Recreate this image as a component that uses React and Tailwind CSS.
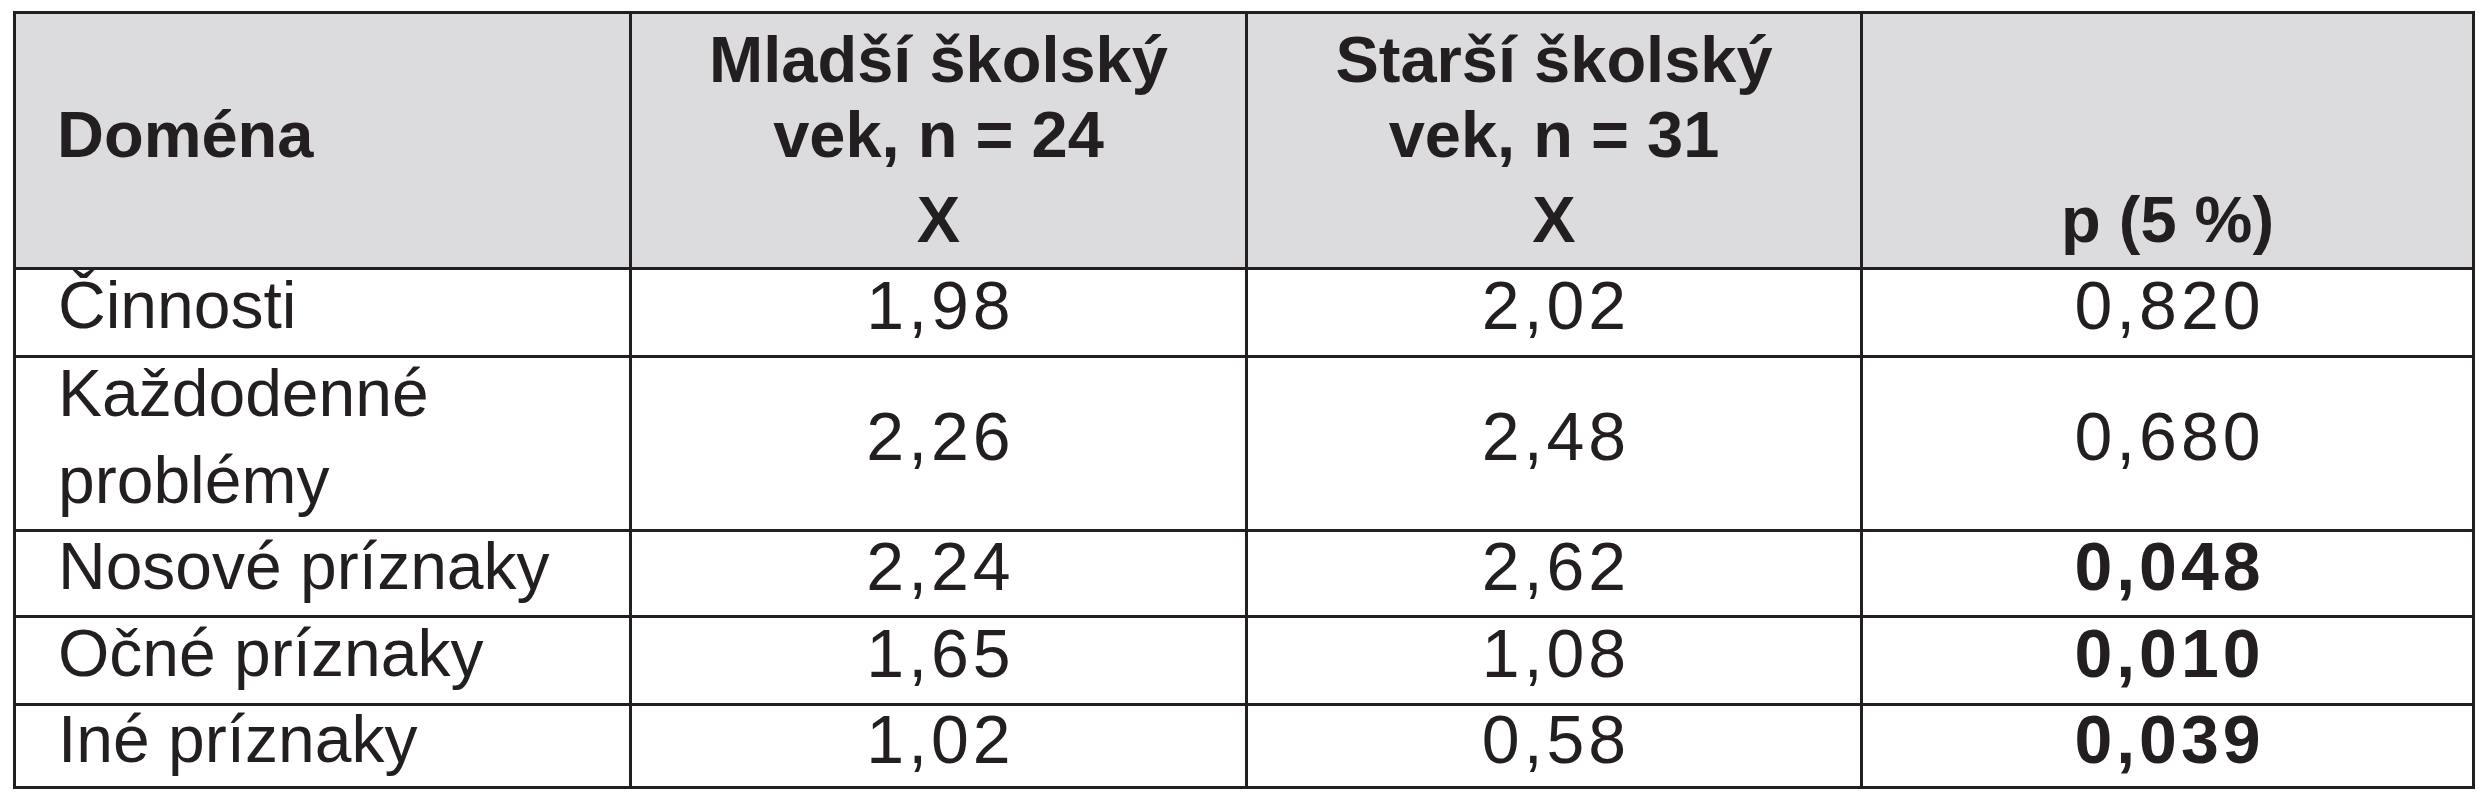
const riadky = [
    { nazov: ['Činnosti'], mladsi: '1,98', starsi: '2,02', p: '0,820', vyznamne: false, vyska: 'h-[88px]' },
    { nazov: ['Každodenné', 'problémy'], mladsi: '2,26', starsi: '2,48', p: '0,680', vyznamne: false, vyska: 'h-[174px]' },
    { nazov: ['Nosové príznaky'], mladsi: '2,24', starsi: '2,62', p: '0,048', vyznamne: true, vyska: 'h-[86px]' },
    { nazov: ['Očné príznaky'], mladsi: '1,65', starsi: '1,08', p: '0,010', vyznamne: true, vyska: 'h-[88px]' },
    { nazov: ['Iné príznaky'], mladsi: '1,02', starsi: '0,58', p: '0,039', vyznamne: true, vyska: 'h-[83px]' },
];

const bunka = 'border-r-[3px] border-b-[3px] border-[#231f20]';
const hlavicka = `${bunka} h-[256px] bg-[#dcdcde] font-bold text-[65px] leading-[75px]`;

const Cislo = ({ hodnota, vyska, tucne }) => (
    <div className={`${bunka} ${vyska} flex flex-col justify-center items-center pb-[14px] leading-[87px] text-[68px] ${tucne ? 'font-bold' : ''}`}>
        <span className="tracking-[4px] mr-[-4px]">{hodnota}</span>
    </div>
);

const App = () => {
    return (
        <div className="w-[2483px] h-[800px] bg-white pt-[11px] pl-[13px] text-[#231f20]" style={{ fontFamily: '"Liberation Sans", Arial, sans-serif' }}>
            <div className="w-[2462px] grid grid-cols-[616px_616px_615px_612px] border-l-[3px] border-t-[3px] border-[#231f20]">
                {/* HLAVICKA */}
                <div className={`${hlavicka} pl-[41px] pt-[83px]`}>Doména</div>
                <div className={`${hlavicka} pt-[8px] text-center`}>
                    <div>Mladší školský</div>
                    <div>vek, n = 24</div>
                    <div className="mt-[10px]">X</div>
                </div>
                <div className={`${hlavicka} pt-[8px] text-center`}>
                    <div>Starší školský</div>
                    <div>vek, n = 31</div>
                    <div className="mt-[10px]">X</div>
                </div>
                <div className={`${hlavicka} pt-[168px] text-center`}>p (5 %)</div>

                {/* RIADKY */}
                {riadky.map((r) => (
                    <div key={r.nazov[0]} className="contents">
                        <div className={`${bunka} ${r.vyska} flex flex-col justify-center items-start pl-[42px] pb-[14px] leading-[87px] text-[66px]`}>
                            <div>
                                {r.nazov.map((riadok) => (
                                    <div key={riadok}>{riadok}</div>
                                ))}
                            </div>
                        </div>
                        <Cislo hodnota={r.mladsi} vyska={r.vyska} />
                        <Cislo hodnota={r.starsi} vyska={r.vyska} />
                        <Cislo hodnota={r.p} vyska={r.vyska} tucne={r.vyznamne} />
                    </div>
                ))}
            </div>
        </div>
    );
};

export default App;
